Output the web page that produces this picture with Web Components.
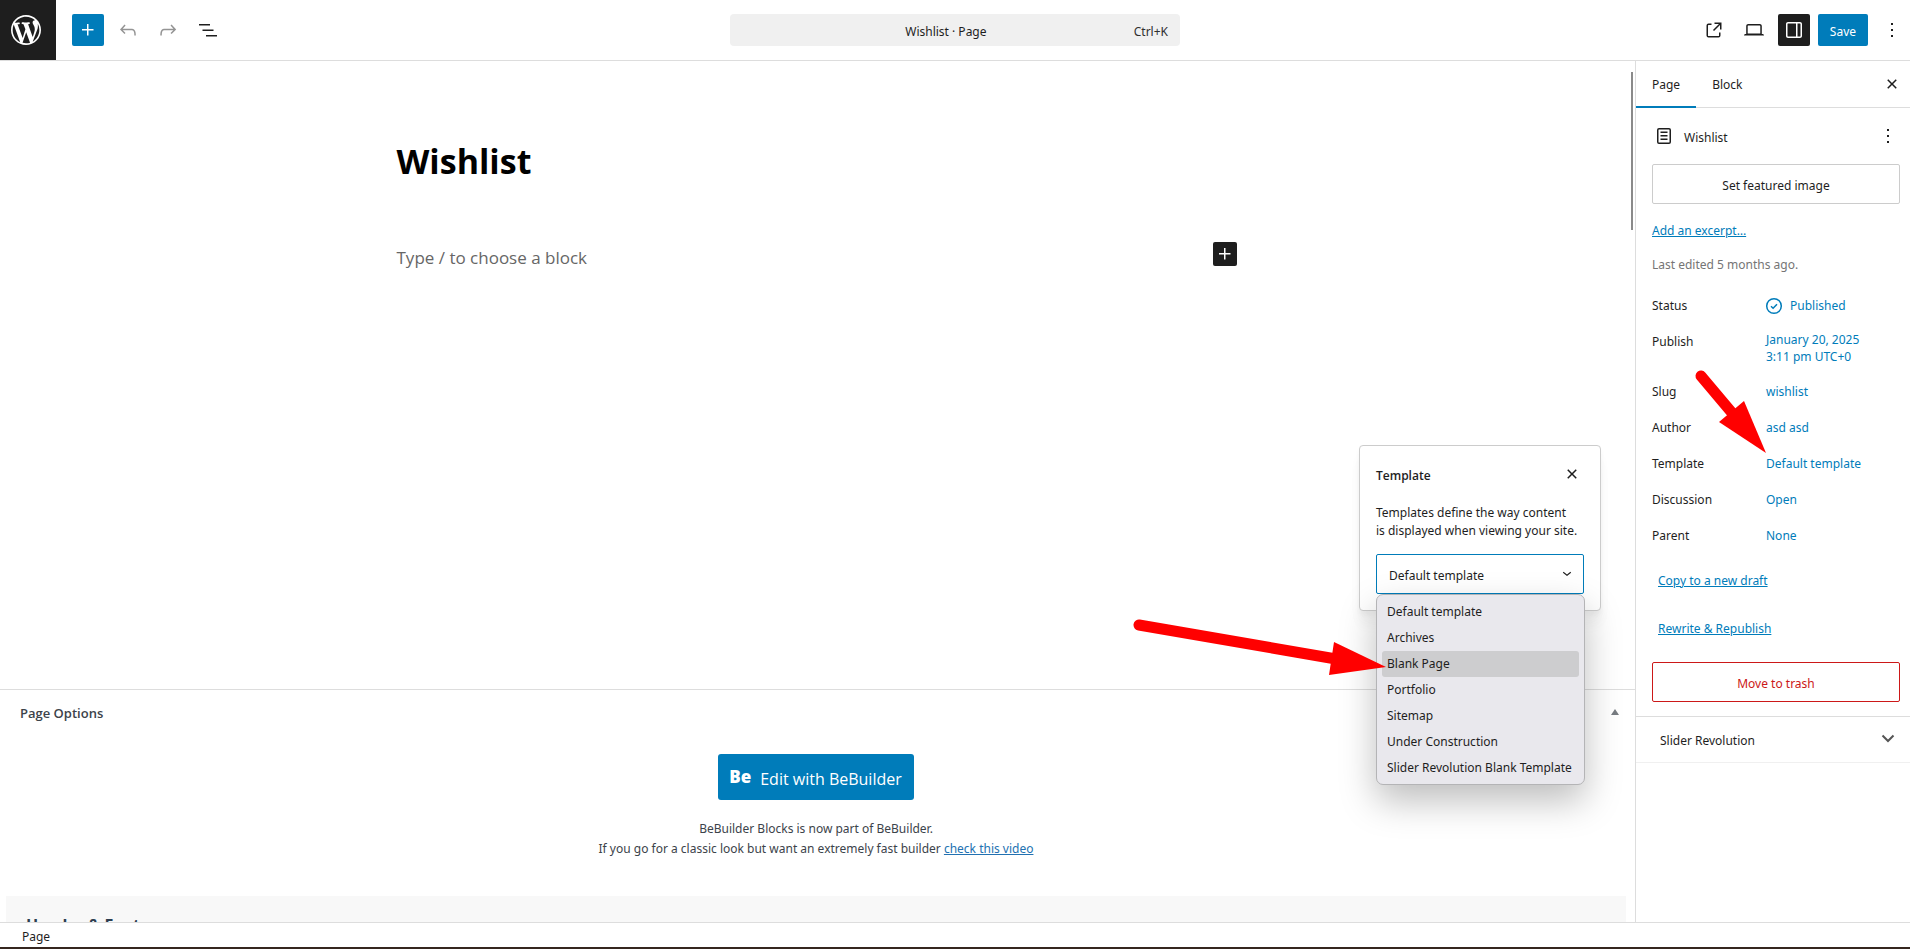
<!DOCTYPE html>
<html lang="en">
<head>
<meta charset="utf-8">
<title>Wishlist · Page</title>
<style>
  html, body { margin: 0; }
  body {
    --accent: #007cba;
    --ink: #1e1e1e;
    --line: #ddd;
    --display: "Open Sans", "Noto Sans", sans-serif;
    font-family: "Noto Sans", "Open Sans", sans-serif;
    font-size: 12px;
    line-height: 16px;
    color: var(--ink);
    background: #fff;
  }
</style>
</head>
<body>
<editor-app></editor-app>
<script>
const ICONS = {
  plus: ['0 0 24 24', '<path d="M11 12.5V17.5H12.5V12.5H17.5V11H12.5V6H11V11H6V12.5H11Z"/>'],
  undo: ['0 0 24 24', '<path d="M18.3 11.7c-.6-.6-1.4-.9-2.3-.9H6.7l2.9-3.3-1.1-1-4.5 5L8.5 16l1-1-2.7-2.7H16c.5 0 .9.2 1.3.5 1 1 1 3.4 1 4.5v.3h1.5v-.2c0-1.5 0-4.3-1.5-5.7z"/>'],
  redo: ['0 0 24 24', '<path d="M15.6 6.5l-1.1 1 2.9 3.3H8c-.9 0-1.7.3-2.3.9-1.4 1.5-1.4 4.2-1.4 5.6v.2h1.5v-.3c0-1.1 0-3.5 1-4.5.3-.3.7-.5 1.3-.5h9.2L14.5 15l1.1 1.1 4.6-4.6-4.6-5z"/>'],
  list: ['0 0 24 24', '<path d="M3 6h11v1.5H3V6Zm3.5 5.5h11V13h-11v-1.5ZM21 17H10v1.5h11V17Z"/>'],
  external: ['0 0 24 24', '<path d="M19.5 4.5h-7V6h4.44l-5.97 5.97 1.06 1.06L18 7.06v4.44h1.5v-7Zm-13 1a2 2 0 0 0-2 2v10a2 2 0 0 0 2 2h10a2 2 0 0 0 2-2v-3H17v3a.5.5 0 0 1-.5.5h-10a.5.5 0 0 1-.5-.5v-10a.5.5 0 0 1 .5-.5h3V5.5h-3Z"/>'],
  desktop: ['0 0 24 24', '<path d="M20.5 16h-.7V8c0-1.1-.9-2-2-2H6.2c-1.1 0-2 .9-2 2v8h-.7c-.8 0-1.5.7-1.5 1.5h20c0-.8-.7-1.5-1.5-1.5zM5.7 8c0-.3.2-.5.5-.5h11.6c.3 0 .5.2.5.5v7.6H5.7V8z"/>'],
  drawer: ['0 0 24 24', '<path fill-rule="evenodd" d="M18 4H6c-1.1 0-2 .9-2 2v12c0 1.1.9 2 2 2h12c1.1 0 2-.9 2-2V6c0-1.1-.9-2-2-2zm-4 14.5H6c-.3 0-.5-.2-.5-.5V6c0-.3.2-.5.5-.5h8v13zm4.5-.5c0 .3-.2.5-.5.5h-2.5v-13H18c.3 0 .5.2.5.5v12z"/>'],
  more: ['0 0 24 24', '<path d="M13 19h-2v-2h2v2zm0-6h-2v-2h2v2zm0-6h-2V5h2v2z"/>'],
  close: ['0 0 24 24', '<path d="M12 13.06l3.712 3.713 1.061-1.06L13.061 12l3.712-3.712-1.06-1.06L12 10.938 8.288 7.227l-1.061 1.06L10.939 12l-3.712 3.712 1.06 1.061L12 13.061z"/>'],
  page: ['0 0 24 24', '<path d="M15.5 7.5h-7V9h7V7.5Zm-7 3.5h7v1.5h-7V11Zm7 3.5h-7V16h7v-1.5Z"/><path fill-rule="evenodd" d="M17 4H7a2 2 0 0 0-2 2v12a2 2 0 0 0 2 2h10a2 2 0 0 0 2-2V6a2 2 0 0 0-2-2ZM7 5.5h10a.5.5 0 0 1 .5.5v12a.5.5 0 0 1-.5.5H7a.5.5 0 0 1-.5-.5V6a.5.5 0 0 1 .5-.5Z"/>'],
  chevron: ['0 0 24 24', '<path d="M17.5 11.6L12 16l-5.5-4.4.9-1.2L12 14l4.5-3.6 1 1.2z"/>'],
  angle: ['0 0 24 24', '<path d="M6.5 9.5L12 15l5.5-5.5" fill="none" stroke="currentColor" stroke-width="2"/>'],
  published: ['0 0 24 24', '<circle cx="12" cy="12" r="7.3" fill="none" stroke="currentColor" stroke-width="1.5"/><path d="M9 12.2l2.1 2 3.9-4" fill="none" stroke="currentColor" stroke-width="1.5"/>'],
  up: ['0 0 8 6', '<path d="M4 0l4 6H0z"/>'],
  wordpress: ['-2 -2 24 24', '<path d="M20 10c0-5.51-4.49-10-10-10C4.48 0 0 4.49 0 10c0 5.52 4.48 10 10 10 5.51 0 10-4.48 10-10zM7.78 15.37L4.37 6.22c.55-.02 1.17-.08 1.17-.08.5-.06.44-1.13-.06-1.11 0 0-1.45.11-2.37.11-.18 0-.37 0-.58-.01C4.12 2.69 6.87 1.11 10 1.11c2.33 0 4.45.87 6.05 2.34-.68-.11-1.65.39-1.65 1.58 0 .74.45 1.36.9 2.1.35.61.55 1.36.55 2.46 0 1.49-1.4 5-1.4 5l-3.03-8.37c.54-.02.82-.17.82-.17.5-.05.44-1.25-.06-1.22 0 0-1.44.12-2.38.12-.87 0-2.33-.12-2.33-.12-.5-.03-.56 1.2-.06 1.22l.92.08 1.26 3.41zM17.41 10c.24-.64.74-1.87.43-4.25.7 1.29 1.05 2.71 1.05 4.25 0 3.29-1.73 6.24-4.4 7.78.97-2.59 1.94-5.2 2.92-7.78zM6.1 18.09C3.12 16.65 1.11 13.53 1.11 10c0-1.3.23-2.48.72-3.59C3.25 10.3 4.67 14.2 6.1 18.09zm4.03-6.63l2.58 6.98c-.86.29-1.76.45-2.71.45-.79 0-1.57-.11-2.29-.33.81-2.38 1.62-4.74 2.42-7.1z"/>'],
};

// Reset shared by every shadow root.
const BASE = `
  *, *::before, *::after { box-sizing: border-box; }
  button, select { font: inherit; color: inherit; background: none; border: 0; padding: 0; margin: 0; }
  a { color: var(--accent); }
  h1, h2, h3, p, dl, dt, dd { margin: 0; }
  .icon { display: inline-flex; align-items: center; justify-content: center; width: 32px; height: 32px; border-radius: 2px; }
`;

function define(name, html) {
  customElements.define(name, class extends HTMLElement {
    constructor() {
      super();
      this.attachShadow({ mode: 'open' }).innerHTML = `<style>${BASE}</style>${html}`;
    }
  });
}

customElements.define('ui-icon', class extends HTMLElement {
  constructor() {
    super();
    this.attachShadow({ mode: 'open' });
  }
  connectedCallback() {
    const [box, body] = ICONS[this.getAttribute('name')];
    this.shadowRoot.innerHTML = `
      <style>
        :host { display: inline-block; flex: none; width: 24px; height: 24px; }
        svg { display: block; width: 100%; height: 100%; fill: currentColor; }
      </style>
      <svg viewBox="${box}" aria-hidden="true">${body}</svg>`;
  }
});

define('editor-header', `
  <style>
    :host { display: grid; grid-template-columns: 1fr 450px 1fr; align-items: center; height: 61px; border-bottom: 1px solid var(--line); }
    .left, .right { display: flex; align-items: center; gap: 8px; }
    .left { height: 60px; }
    .logo { display: flex; align-items: center; width: 56px; height: 60px; padding-left: 8px; margin-right: 8px; background: var(--ink); color: #fff; }
    .logo ui-icon { width: 36px; height: 36px; }
    .primary { background: var(--accent); color: #fff; }
    .dim { color: #949494; }
    .right { justify-content: flex-end; padding-right: 2px; }
    .right a { color: inherit; }
    .on { background: var(--ink); color: #fff; }
    .save { height: 32px; padding: 3px 12px 0; border-radius: 2px; background: var(--accent); color: #fff; }
    .command { display: flex; align-items: center; height: 32px; padding: 3px 12px 0 28px; border-radius: 4px; background: #f0f0f0; }
    .command .doc { flex: 1; text-align: center; }
    .command .key { color: #2f2f2f; }
  </style>
  <div class="left">
    <a class="logo" href="#" aria-label="View pages"><ui-icon name="wordpress"></ui-icon></a>
    <button class="icon primary" aria-label="Add block"><ui-icon name="plus"></ui-icon></button>
    <button class="icon dim" aria-label="Undo"><ui-icon name="undo"></ui-icon></button>
    <button class="icon dim" aria-label="Redo"><ui-icon name="redo"></ui-icon></button>
    <button class="icon" aria-label="Document overview"><ui-icon name="list"></ui-icon></button>
  </div>
  <button class="command"><span class="doc">Wishlist · Page</span><span class="key">Ctrl+K</span></button>
  <div class="right">
    <a class="icon" href="#" aria-label="View page"><ui-icon name="external"></ui-icon></a>
    <button class="icon" aria-label="Preview"><ui-icon name="desktop"></ui-icon></button>
    <button class="icon on" aria-label="Settings"><ui-icon name="drawer"></ui-icon></button>
    <button class="save">Save</button>
    <button class="icon" aria-label="Options"><ui-icon name="more"></ui-icon></button>
  </div>
`);

define('editor-canvas', `
  <style>
    :host { display: block; position: relative; overflow: hidden; padding: 72px 2px 0 0; }
    .column { max-width: 840px; margin: 0 auto; }
    h1 { font-family: var(--display); font-size: 34px; line-height: 56px; font-weight: 700; color: #000; }
    .block { display: flex; align-items: center; justify-content: space-between; margin-top: 48px; height: 36px; }
    .block p { font-family: var(--display); font-size: 17px; line-height: 28px; padding-top: 6px; color: #666; }
    .add { width: 24px; height: 24px; background: var(--ink); color: #fff; margin-bottom: 2px; }
    .thumb { position: absolute; right: 2px; top: 11px; width: 2px; height: 158px; background: #8a8a8a; }
  </style>
  <div class="column">
    <h1>Wishlist</h1>
    <div class="block">
      <p>Type / to choose a block</p>
      <button class="icon add" aria-label="Add block"><ui-icon name="plus"></ui-icon></button>
    </div>
  </div>
  <div class="thumb"></div>
`);

define('meta-boxes', `
  <style>
    :host { display: block; overflow: hidden; border-top: 1px solid var(--line); color: #3c434a; }
    header { display: flex; align-items: center; justify-content: space-between; height: 46px; padding: 0 16px 0 20px; }
    h2 { font-family: var(--display); font-size: 13px; line-height: 20px; font-weight: 600; }
    header ui-icon { width: 8px; height: 6px; color: #787c82; margin-bottom: 2px; }
    .intro { display: flex; flex-direction: column; align-items: center; padding: 18px 3px 0 0; text-align: center; line-height: 20px; }
    .edit { display: inline-flex; align-items: center; gap: 9px; height: 46px; padding: 0 12px 0 11px; margin-bottom: 19px; border-radius: 3px; background: var(--accent); color: #fff; font-family: var(--display); font-size: 16px; text-decoration: none; }
    .edit span { padding-top: 4px; }
    .edit b { font-weight: 800; font-size: 17px; }
    .intro a:not(.edit) { color: #2271b1; }
    section { margin: 37px 9px 0 6px; padding: 17px 20px; background: #f8f8f8; }
    h3 { font-family: var(--display); font-size: 16px; line-height: 24px; font-weight: 700; color: #2c3e50; }
  </style>
  <header>
    <h2>Page Options</h2>
    <button aria-label="Toggle panel"><ui-icon name="up"></ui-icon></button>
  </header>
  <div class="intro">
    <a class="edit" href="#"><b>Be</b><span>Edit with BeBuilder</span></a>
    <p>BeBuilder Blocks is now part of BeBuilder.</p>
    <p>If you go for a classic look but want an extremely fast builder <a href="#">check this video</a></p>
  </div>
  <section><h3>Header &amp; Footer</h3></section>
`);

define('info-row', `
  <style>
    :host { display: grid; grid-template-columns: 114px 1fr; align-items: start; line-height: 17px; }
    dt, dd { min-height: 32px; padding: 8px 0 7px; }
    dd { display: flex; align-items: center; gap: 4px; color: var(--accent); }
    :host([tall]) dd { padding: 6px 0; }
    ::slotted(button) { font: inherit; color: inherit; background: none; border: 0; padding: 0; text-align: left; }
    ::slotted(ui-icon) { margin: -4px 0 -4px -4px; }
  </style>
  <dt><slot name="label"></slot></dt>
  <dd><slot></slot></dd>
`);

define('editor-sidebar', `
  <style>
    :host { display: block; border-left: 1px solid var(--line); overflow: hidden; }
    .tabs { display: flex; align-items: center; height: 47px; border-bottom: 1px solid var(--line); padding-right: 2px; }
    .tabs [role=tab] { height: 47px; padding: 4px 16px 0; border-bottom: 2px solid transparent; }
    .tabs [aria-selected=true] { border-color: var(--accent); }
    .tabs .icon { margin-left: auto; }
    .summary { display: flex; flex-direction: column; padding: 12px 10px 14px 16px; border-bottom: 1px solid var(--line); }
    .card { display: flex; align-items: center; height: 32px; }
    .card h2 { flex: 1; padding: 3px 0 0 8px; font-size: 12px; line-height: 16px; font-weight: 400; }
    .card .icon { margin-right: -4px; }
    .box { height: 40px; padding-top: 3px; border: 1px solid #ccc; border-radius: 2px; }
    .featured { margin-top: 12px; }
    .summary a { align-self: flex-start; }
    .excerpt { margin-top: 19px; }
    .edited { margin: 18px 0 16px; color: #757575; }
    .rows { display: flex; flex-direction: column; gap: 4px; }
    .draft { margin: 22px 0 0 6px; }
    .draft + .draft { margin: 32px 0 25px 6px; }
    .trash { border-color: #cc1818; color: #cc1818; }
    .panel { display: flex; align-items: center; justify-content: space-between; width: 100%; height: 46px; padding: 2px 10px 0 24px; border-bottom: 1px solid #f0f0f0; }
    .panel ui-icon { color: #555; margin-bottom: 6px; }
  </style>
  <div class="tabs" role="tablist">
    <button role="tab" aria-selected="true">Page</button>
    <button role="tab" aria-selected="false">Block</button>
    <button class="icon" aria-label="Close settings"><ui-icon name="close"></ui-icon></button>
  </div>
  <div class="summary">
    <div class="card">
      <ui-icon name="page"></ui-icon>
      <h2>Wishlist</h2>
      <button class="icon" aria-label="Actions"><ui-icon name="more"></ui-icon></button>
    </div>
    <button class="box featured">Set featured image</button>
    <a class="excerpt" href="#">Add an excerpt…</a>
    <p class="edited">Last edited 5 months ago.</p>
    <div class="rows">
      <info-row><span slot="label">Status</span><ui-icon name="published"></ui-icon><button>Published</button></info-row>
      <info-row tall><span slot="label">Publish</span><button>January 20, 2025<br>3:11 pm UTC+0</button></info-row>
      <info-row><span slot="label">Slug</span><button>wishlist</button></info-row>
      <info-row><span slot="label">Author</span><button>asd asd</button></info-row>
      <info-row><span slot="label">Template</span><button>Default template</button></info-row>
      <info-row><span slot="label">Discussion</span><button>Open</button></info-row>
      <info-row><span slot="label">Parent</span><button>None</button></info-row>
    </div>
    <a class="draft" href="#">Copy to a new draft</a>
    <a class="draft" href="#">Rewrite &amp; Republish</a>
    <button class="box trash">Move to trash</button>
  </div>
  <button class="panel"><span>Slider Revolution</span><ui-icon name="angle"></ui-icon></button>
`);

define('template-popover', `
  <style>
    :host { display: block; width: 242px; height: 166px; padding: 15px 16px; border: 1px solid #ccc; border-radius: 4px; background: #fff; box-shadow: 0 4px 5px rgba(0,0,0,.04), 0 12px 12px rgba(0,0,0,.03), 0 16px 16px rgba(0,0,0,.02); }
    header { display: flex; align-items: center; justify-content: space-between; height: 26px; }
    header .icon { margin-right: -4px; }
    h2 { font-family: var(--display); font-size: 12px; line-height: 16px; font-weight: 600; padding-top: 4px; }
    p { margin: 17px 0 14px; line-height: 18px; white-space: nowrap; }
    .field { position: relative; }
    select { appearance: none; display: block; width: 208px; height: 40px; padding: 3px 12px 0; border: 1px solid var(--accent); border-radius: 2px; background: #fff; outline: 0; }
    .field ui-icon { position: absolute; right: 8px; top: 10px; width: 18px; height: 18px; pointer-events: none; }
    ul { position: absolute; left: 0; top: 40px; width: 209px; margin: 0; padding: 4px 5px 3px; list-style: none; background: #e9e8ed; border: 1px solid #b4b4b6; border-radius: 7px; box-shadow: 0 16px 36px rgba(0,0,0,.26); white-space: nowrap; }
    li { height: 26px; line-height: 26px; padding: 0 5px; border-radius: 3px; }
    li.active { background: #cdcdcf; }
  </style>
  <header>
    <h2>Template</h2>
    <button class="icon" aria-label="Close"><ui-icon name="close"></ui-icon></button>
  </header>
  <p>Templates define the way content<br>is displayed when viewing your site.</p>
  <div class="field">
    <select aria-label="Template"><option>Default template</option></select>
    <ui-icon name="chevron"></ui-icon>
    <ul role="listbox" aria-label="Template choices">
      <li role="option">Default template</li>
      <li role="option">Archives</li>
      <li role="option" class="active" aria-selected="true">Blank Page</li>
      <li role="option">Portfolio</li>
      <li role="option">Sitemap</li>
      <li role="option">Under Construction</li>
      <li role="option">Slider Revolution Blank Template</li>
    </ul>
  </div>
`);

// Red pointers drawn over the editor; the drawing spans 780 x 320 from the right edge.
define('pointer-arrows', `
  <style>
    :host { display: block; pointer-events: none; }
    svg { display: block; width: 780px; height: 320px; }
    line { stroke: #f00; stroke-width: 11; stroke-linecap: round; }
    path { fill: #f00; }
  </style>
  <svg viewBox="1130 365 780 320" aria-hidden="true">
    <line x1="1139" y1="625" x2="1336" y2="659"/>
    <path d="M1386 667L1334 642L1329 675Z"/>
    <line x1="1701" y1="376" x2="1733" y2="414"/>
    <path d="M1766 453L1744 401L1719 422Z"/>
  </svg>
`);

define('editor-app', `
  <style>
    :host { display: flex; flex-direction: column; height: 100vh; position: relative; overflow: hidden; border-bottom: 2px solid #35261f; box-sizing: border-box; }
    main { flex: 1; min-height: 0; display: grid; grid-template-columns: minmax(0, 1fr) 275px; }
    .content { display: flex; flex-direction: column; min-height: 0; }
    editor-canvas { flex: 1; }
    meta-boxes { flex: 0 0 233px; }
    footer { height: 25px; padding: 6px 22px 0; border-top: 1px solid var(--line); }
    template-popover { position: absolute; right: 309px; top: 445px; }
    pointer-arrows { position: absolute; right: 0; top: 365px; }
  </style>
  <editor-header></editor-header>
  <main>
    <div class="content">
      <editor-canvas></editor-canvas>
      <meta-boxes></meta-boxes>
    </div>
    <editor-sidebar></editor-sidebar>
  </main>
  <footer>Page</footer>
  <template-popover></template-popover>
  <pointer-arrows></pointer-arrows>
`);
</script>
</body>
</html>
